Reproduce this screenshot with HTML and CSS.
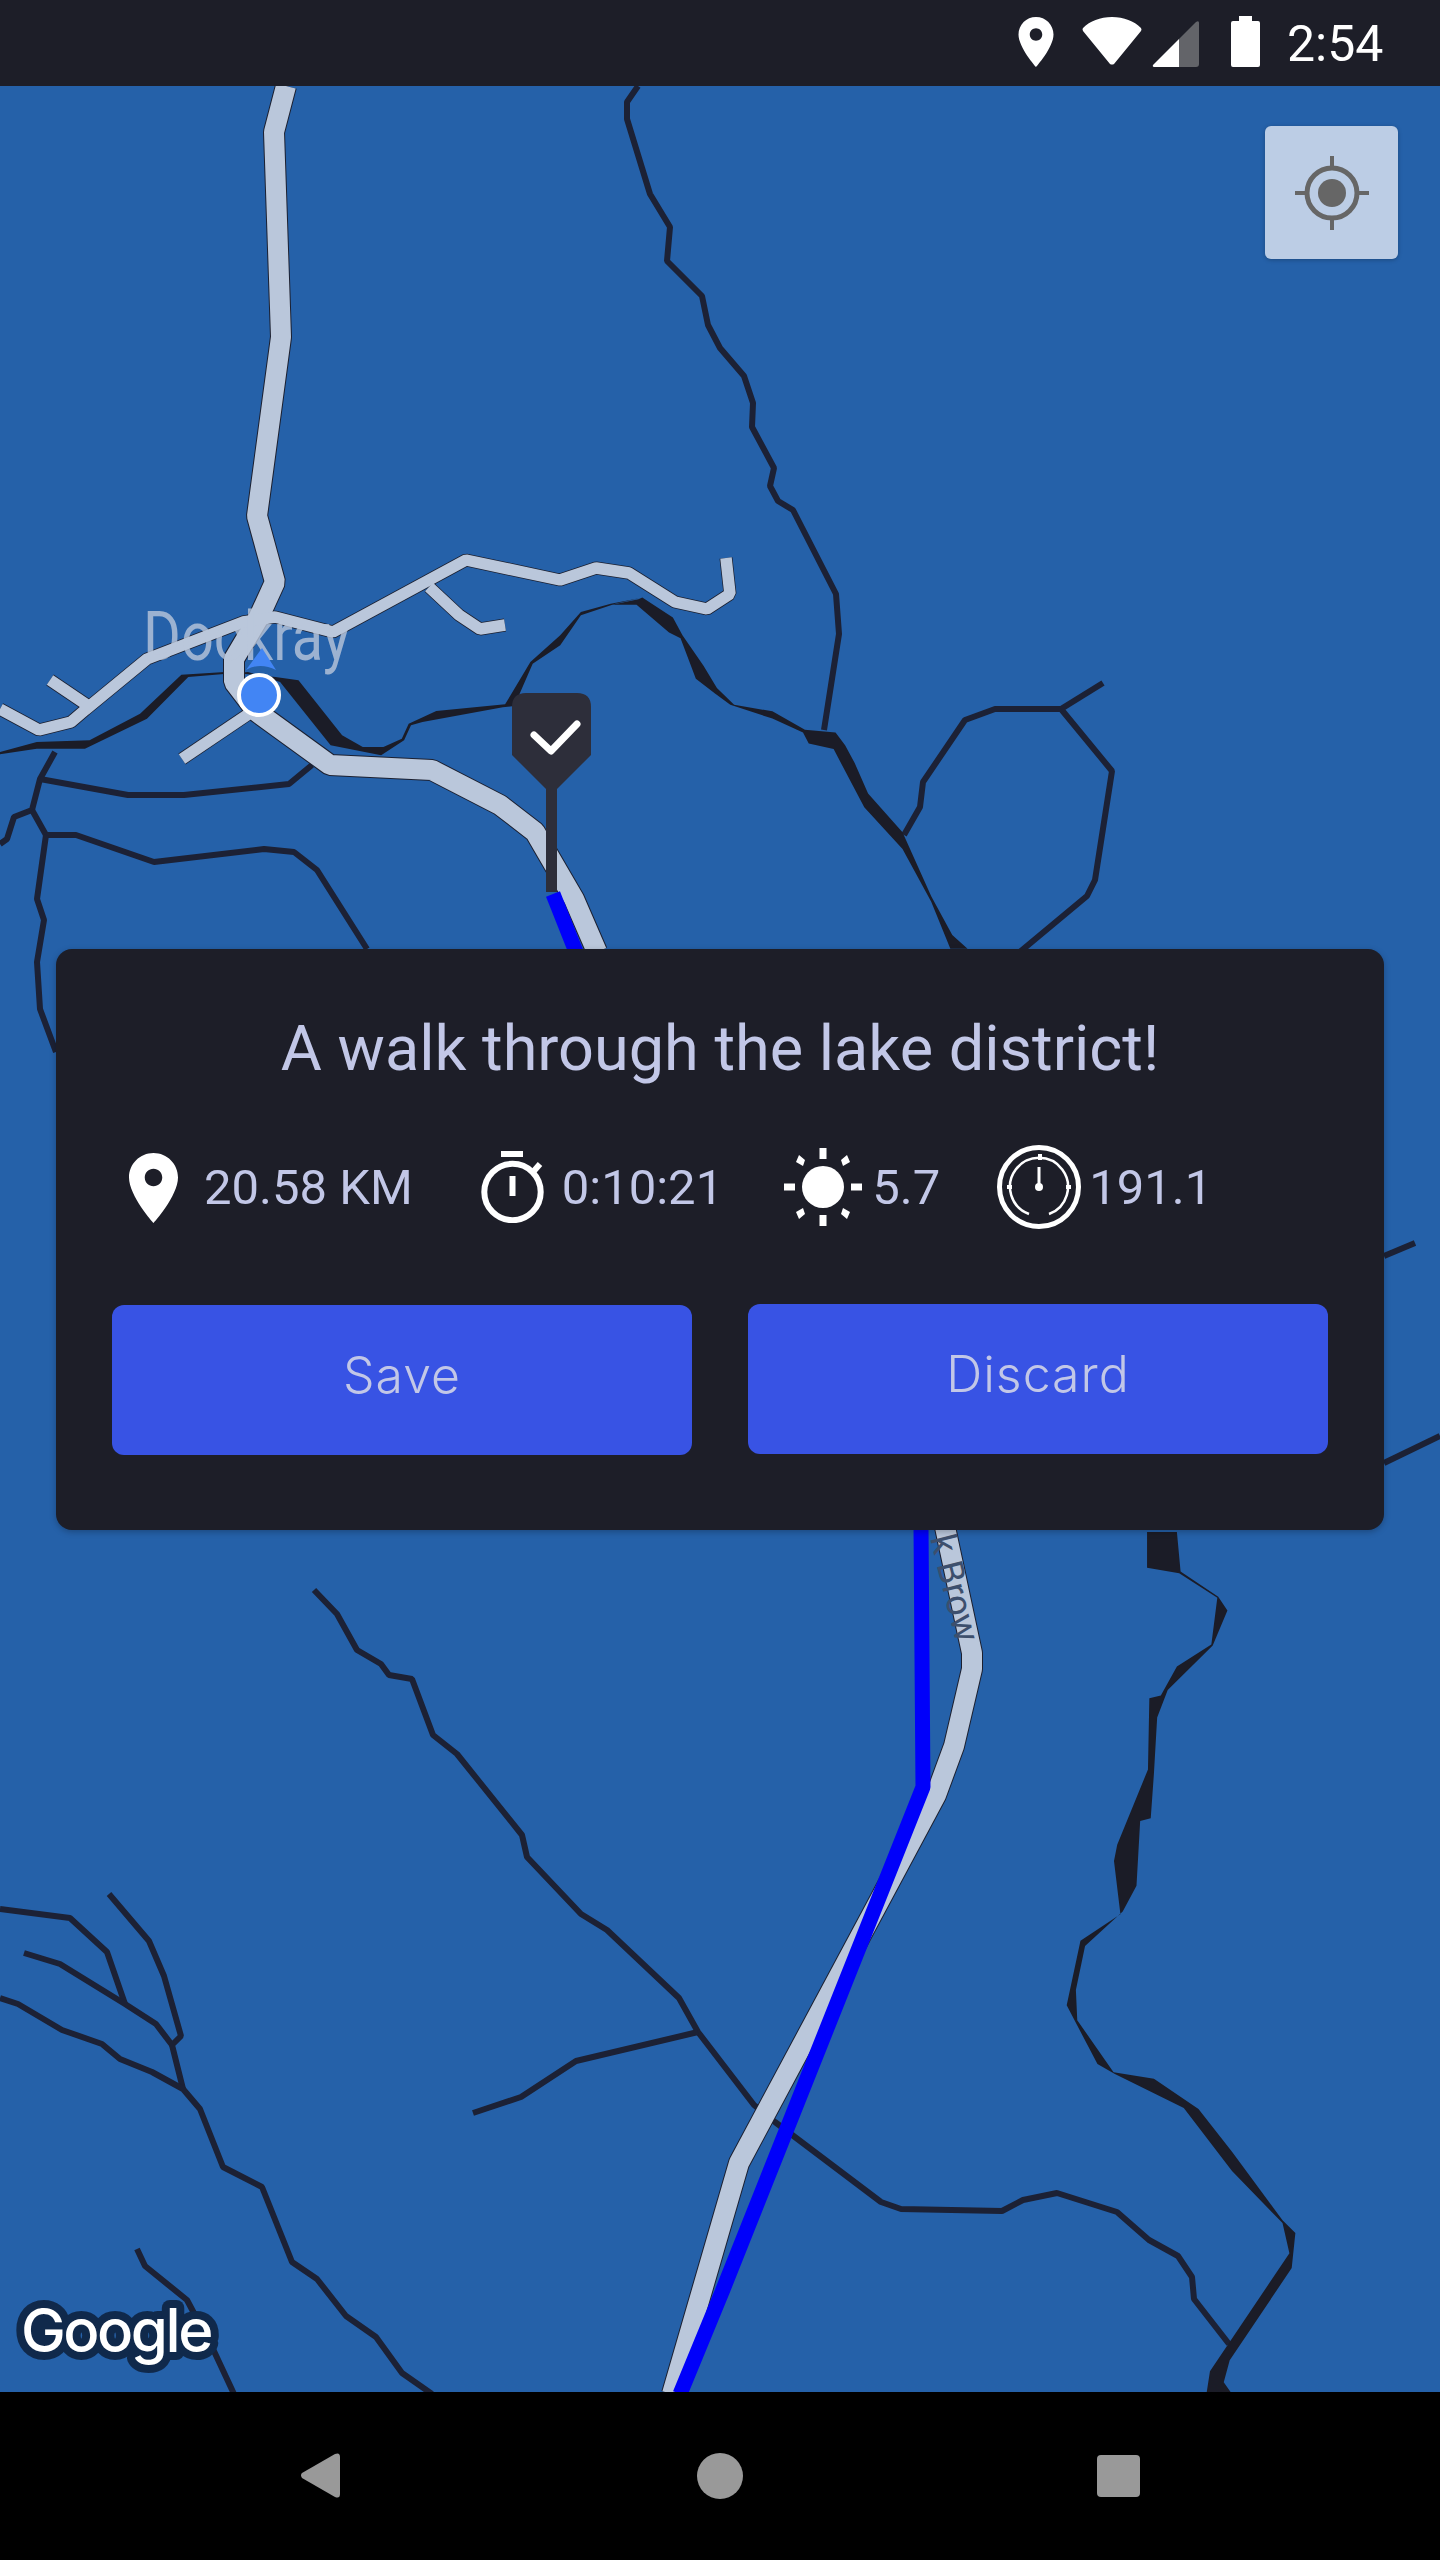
FILE: index.html
```html
<!DOCTYPE html>
<html lang="en">
<head>
<meta charset="utf-8">
<title>Walk summary</title>
<link rel="stylesheet" href="styles.css">
</head>
<body>
<div class="screen">
  <header class="status-bar">
    <svg class="st-pin" viewBox="5 2 14 20"><path d="M12 2C8.13 2 5 5.13 5 9c0 5.25 7 13 7 13s7-7.75 7-13c0-3.87-3.13-7-7-7zm0 9.5c-1.38 0-2.5-1.12-2.5-2.5s1.12-2.5 2.5-2.5 2.5 1.12 2.5 2.5-1.12 2.5-2.5 2.5z"/></svg>
    <svg class="st-wifi" viewBox="0 0 60 48"><path d="M1 11C8 4 18 0 30 0s22 4 29 11q1 2 0 3L32 47q-2 1-4 0L1 14q-1-2 0-3z"/></svg>
    <svg class="st-signal" viewBox="0 0 47 47"><path d="M1 45 27 19V47H3Q0 47 1 45Z"/><path class="dim" d="M27 19 44 2Q47 0 47 3V44Q47 47 44 47H27Z"/></svg>
    <svg class="st-battery" viewBox="0 0 29 51"><path d="M8 0H21V5H27Q29 5 29 7V49Q29 51 27 51H2Q0 51 0 49V7Q0 5 2 5H8Z"/></svg>
    <span class="st-time">2:54</span>
  </header>

  <main class="map">
    <svg class="map-canvas" viewBox="0 84 1440 2308">
      <!-- thin streams -->
      <g class="stream">
        <polyline points="638,84 627,100 627,117 650,192 670,225 667,259 702,294 708,323 720,346 744,374 753,401 752,425 774,466 770,484 778,499 793,508 836,592 839,632 824,728"/>
        <polyline points="904,833 920,805 923,780 965,718 995,707 1061,707 1112,769 1095,878 1087,894 1015,954"/>
        <polyline points="1061,707 1103,681"/>
        <polyline points="55,750 40,777 32,808 14,815 7,837 0,842"/>
        <polyline points="40,777 128,793 184,793 289,782 312,763"/>
        <polyline points="32,808 46,833 76,833 154,860 264,847 294,850 317,868 367,947"/>
        <polyline points="46,833 37,897 44,918 37,960 40,1007 56,1050"/>
        <polyline points="1384,1254 1415,1241"/>
        <polyline points="1384,1461 1440,1434"/>
        <polyline points="314,1588 337,1612 357,1648 381,1662 389,1673 412,1677 433,1733 457,1752 522,1833 527,1855 581,1912 607,1928 679,1996 698,2030 754,2103 775,2120 881,2200 901,2207 1002,2209 1023,2198 1057,2191 1117,2210 1149,2238 1178,2254 1192,2275 1194,2297 1229,2342"/>
        <polyline points="473,2111 521,2095 576,2059 698,2030"/>
        <polyline points="0,1907 70,1916 107,1950 125,2002"/>
        <polyline points="24,1951 60,1962 125,2002 156,2022 172,2043"/>
        <polyline points="109,1892 149,1939 164,1974 181,2034 172,2043 183,2087"/>
        <polyline points="0,1996 18,2002 62,2028 102,2042 120,2057 152,2070 183,2087 200,2107 223,2165 262,2185 292,2260 317,2277 346,2314 376,2335 402,2371 432,2392"/>
        <polyline points="137,2247 145,2264 187,2298 213,2347 234,2392"/>
      </g>
      <!-- wide rivers, drawn with varying width -->
      <g class="river">
        <polygon transform="translate(0 520) scale(.4592 .3333)" points="0,690 80,660 195,655 305,575 395,458 490,450 600,465 650,475 745,640 790,675 835,675 875,650 890,605 950,567 1100,547 1155,420 1220,340 1265,270 1330,245 1395,228 1340,245 1265,280 1220,370 1160,425 1120,552 1095,556 920,600 895,610 880,655 830,700 720,670 610,480 540,450 410,465 320,590 185,680 80,680 0,697"/>
        <polygon transform="translate(560 84) scale(.3827 .5549)" points="215,922 295,958 320,990 375,1045 410,1085 455,1115 555,1127 640,1160 720,1165 745,1188 770,1220 805,1275 895,1345 970,1460 1025,1530 1065,1555 1020,1555 970,1470 895,1375 795,1300 715,1195 650,1185 635,1165 555,1140 445,1115 405,1095 355,1068 315,995 285,985 200,935 135,935 205,925"/>
        <polygon transform="translate(720 1530) scale(.4592 .5485)" points="930,0 995,0 1003,72 1085,118 1105,143 1073,207 975,288 952,338 945,440 938,522 915,527 907,645 877,692 795,755 775,835 778,890 857,985 945,997 1042,1052 1115,1130 1225,1255 1253,1278 1245,1342 1110,1510 1097,1550 1112,1568 1060,1568 1067,1530 1240,1315 1225,1260 1115,1165 1010,1050 860,988 822,970 755,863 785,745 872,697 858,600 865,570 932,433 935,303 960,298 995,245 1070,205 1083,120 1000,75 930,65"/>
      </g>
      <!-- roads -->
      <g class="road-edge wide">
        <polyline points="286,84 274,130 281,335 257,514 275,580 259,615 234,657 234,680 257,710 330,763 432,768 500,803 535,830 574,897 597,950"/>
        <polyline points="945,1525 972,1651 972,1667 954,1744 936,1793 739,2161 672,2392"/>
      </g>
      <g class="road-edge narrow">
        <polyline points="0,707 39,728 71,720 85,708 147,657 243,620 275,615 333,630 466,558 560,578 596,566 629,571 675,600 707,607 730,592 726,556"/>
        <polyline points="50,678 90,705"/>
        <polyline points="429,585 459,613 480,627 505,623"/>
        <polyline points="182,757 259,705"/>
      </g>
      <g class="road wide">
        <polyline points="286,84 274,130 281,335 257,514 275,580 259,615 234,657 234,680 257,710 330,763 432,768 500,803 535,830 574,897 597,950"/>
        <polyline points="945,1525 972,1651 972,1667 954,1744 936,1793 739,2161 672,2392"/>
      </g>
      <g class="road narrow">
        <polyline points="0,707 39,728 71,720 85,708 147,657 243,620 275,615 333,630 466,558 560,578 596,566 629,571 675,600 707,607 730,592 726,556"/>
        <polyline points="50,678 90,705"/>
        <polyline points="429,585 459,613 480,627 505,623"/>
        <polyline points="182,757 259,705"/>
      </g>
      <!-- walked route -->
      <polyline class="route" points="553,892 576,950"/>
      <polyline class="route" points="921,1525 923,1785 722,2290 680,2392"/>
      <!-- labels -->
      <text class="label-town" x="143" y="658" textLength="207" lengthAdjust="spacingAndGlyphs">Dockray</text>
      <text class="label-road" transform="translate(930 1536) rotate(76)">k Brow</text>
      <!-- my location -->
      <path class="me-arrow" d="M262 646 246 668Q260 660 276 668Z"/>
      <circle class="me-dot" cx="259" cy="693" r="20"/>
      <!-- end marker -->
      <path class="pin-body" d="M526 691H577Q591 691 591 705V753L557 787V890H546V787L512 753V705Q512 691 526 691Z"/>
      <polyline class="pin-check" points="534,733 551,749 577,722"/>
      <text class="google" x="21" y="2350">Google</text>
    </svg>

    <button class="locate" type="button" aria-label="My location">
      <svg viewBox="0 0 76 76"><circle class="ring" cx="38" cy="38" r="25"/><circle class="core" cx="38" cy="38" r="14"/><path class="ticks" d="M38 1V12M38 64V75M1 38H12M64 38H75"/></svg>
    </button>

    <section class="card">
      <h1 class="card-title">A walk through the lake district!</h1>
      <div class="stats">
        <div class="stat stat-distance">
          <svg class="ic-pin" viewBox="5 2 14 20"><path d="M12 2C8.13 2 5 5.13 5 9c0 5.25 7 13 7 13s7-7.75 7-13c0-3.87-3.13-7-7-7zm0 9.5c-1.38 0-2.5-1.12-2.5-2.5s1.12-2.5 2.5-2.5 2.5 1.12 2.5 2.5-1.12 2.5-2.5 2.5z"/></svg>
          <span>20.58 KM</span>
        </div>
        <div class="stat stat-time">
          <svg class="ic-watch" viewBox="0 0 63 72"><rect x="20" y="0" width="22" height="6"/><circle class="line" cx="31.5" cy="41" r="28.2"/><rect x="28.5" y="25" width="6" height="20"/><path class="line" d="M52 21 59 13"/></svg>
          <span>0:10:21</span>
        </div>
        <div class="stat stat-sun">
          <svg class="ic-sun" viewBox="0 0 78 78">
            <circle cx="39" cy="39" r="21"/>
            <rect x="35.5" y="0" width="7" height="11"/><rect x="35.5" y="67" width="7" height="11"/>
            <rect x="0" y="35.5" width="11" height="7"/><rect x="67" y="35.5" width="11" height="7"/>
            <path d="M15 7 21 12 19 18 12 14ZM63 7 57 12 59 18 66 14ZM15 71 21 66 19 60 12 64ZM63 71 57 66 59 60 66 64Z"/>
          </svg>
          <span>5.7</span>
        </div>
        <div class="stat stat-speed">
          <svg class="ic-gauge" viewBox="0 0 84 84">
            <circle class="outer" cx="42" cy="42" r="39.5"/>
            <path class="inner" d="M32 69A29 29 0 1 1 52 69"/>
            <rect x="41" y="9" width="4" height="6"/><rect x="10" y="40" width="5" height="4"/><rect x="69" y="40" width="5" height="4"/>
            <rect x="40.5" y="22" width="3" height="20"/><circle cx="42" cy="42" r="4"/>
          </svg>
          <span>191.1</span>
        </div>
      </div>
      <div class="actions">
        <button class="btn btn-save" type="button">Save</button>
        <button class="btn" type="button">Discard</button>
      </div>
    </section>
  </main>

  <footer class="nav-bar">
    <svg class="nav-back" viewBox="0 0 39 45"><path d="M1 20 34 1Q39-1 39 4V41Q39 46 34 44L1 25Q-1 22 1 20Z"/></svg>
    <span class="nav-home"></span>
    <span class="nav-recent"></span>
  </footer>
</div>
</body>
</html>
```

FILE: styles.css
```css
* { box-sizing: border-box; }

html, body {
  margin: 0;
  padding: 0;
  background: #000;
}

body {
  font-family: Roboto, "Liberation Sans", sans-serif;
}

.screen {
  display: flex;
  flex-direction: column;
  width: 1440px;
  height: 2560px;
  overflow: hidden;
}

/* status bar */
.status-bar {
  flex: 0 0 84px;
  display: flex;
  align-items: flex-start;
  padding-left: 1018px;
  background: #1d1e28;
  color: #fff;
  fill: #fff;
}

.st-pin { width: 36px; height: 50px; margin-top: 17px; }
.st-wifi { width: 60px; height: 48px; margin-top: 17px; margin-left: 28px; }
.st-signal { width: 47px; height: 47px; margin-top: 20px; margin-left: 10px; }
.st-signal .dim { fill: #636469; }
.st-battery { width: 29px; height: 51px; margin-top: 16px; margin-left: 32px; }
.st-time {
  margin-left: 27px;
  margin-top: 2px;
  font-size: 50px;
  line-height: 84px;
}

/* map */
.map {
  position: relative;
  flex: 1 1 auto;
  background: #2561a9;
  overflow: hidden;
}

.map-canvas {
  position: absolute;
  left: 0;
  top: 0;
  width: 1440px;
  height: 2308px;
}

.stream polyline {
  fill: none;
  stroke: #1c2135;
  stroke-width: 6;
  stroke-linejoin: bevel;
}

.river polygon { fill: #1b1c27; }

.road-edge polyline, .road polyline {
  fill: none;
  stroke-linejoin: bevel;
}
.road-edge polyline { stroke: #1c2030; }
.road polyline { stroke: #bac7db; }
.road-edge.wide polyline { stroke-width: 22; }
.road.wide polyline { stroke-width: 20; }
.road-edge.narrow polyline { stroke-width: 13; }
.road.narrow polyline { stroke-width: 11.5; }

.route {
  fill: none;
  stroke: #0000fa;
  stroke-width: 15;
  stroke-linejoin: bevel;
}

.label-town {
  font-family: Roboto, sans-serif;
  font-size: 68px;
  font-weight: 400;
  fill: #bac7db;
  fill-opacity: .8;
}

.label-road {
  font-family: Roboto, sans-serif;
  font-size: 36px;
  fill: #3d4f6d;
}

.me-arrow { fill: #4285f4; }
.me-dot {
  fill: #4285f4;
  stroke: #fff;
  stroke-width: 4;
}

.pin-body { fill: #2d2e3a; }
.pin-check {
  fill: none;
  stroke: #fff;
  stroke-width: 7;
  stroke-linecap: round;
  stroke-linejoin: round;
}

.google {
  font-family: Inter, sans-serif;
  font-size: 60px;
  font-weight: 500;
  letter-spacing: -2.5px;
  fill: #fff;
  stroke: #10294b;
  stroke-width: 16;
  stroke-linejoin: round;
  paint-order: stroke;
}

.locate {
  position: absolute;
  top: 40px;
  right: 42px;
  display: flex;
  align-items: center;
  justify-content: center;
  width: 133px;
  height: 133px;
  padding: 0;
  border: 0;
  border-radius: 6px;
  background: #bccde5;
  box-shadow: 0 1px 4px rgba(0, 0, 0, .25);
}
.locate svg { width: 76px; height: 76px; }
.locate .ring { fill: none; stroke: #666; stroke-width: 5; }
.locate .core { fill: #666; }
.locate .ticks { fill: none; stroke: #666; stroke-width: 4; }

/* summary card */
.card {
  position: absolute;
  left: 56px;
  top: 863px;
  width: 1328px;
  height: 581px;
  padding: 0 56px;
  background: #1d1e28;
  border-radius: 16px;
  box-shadow: 0 2px 6px rgba(0, 0, 0, .25);
  color: #c2c7e7;
}

.card-title {
  margin: 64px 0 0;
  font-size: 63px;
  font-weight: 400;
  line-height: 72px;
  text-align: center;
}

.stats {
  display: flex;
  align-items: center;
  height: 84px;
  margin-top: 60px;
  padding-left: 17px;
  font-size: 49px;
  font-weight: 400;
}

.stat {
  display: flex;
  align-items: center;
}
.stat svg { fill: #fff; flex: none; }

.stat-distance { gap: 26px; }
.stat-time { gap: 18px; margin-left: 68px; }
.stat-sun { gap: 10px; margin-left: 61px; }
.stat-speed { gap: 8px; margin-left: 57px; }

.ic-pin { width: 49px; height: 70px; margin-top: 1px; }
.ic-watch { width: 63px; height: 72px; }
.ic-watch .line { fill: none; stroke: #fff; stroke-width: 6; }
.ic-sun { width: 78px; height: 78px; }
.ic-gauge { width: 84px; height: 84px; }
.ic-gauge .outer { fill: none; stroke: #fff; stroke-width: 5; }
.ic-gauge .inner { fill: none; stroke: #fff; stroke-width: 2.5; }

.actions {
  display: grid;
  grid-template-columns: 580px 580px;
  gap: 56px;
  margin-top: 75px;
}

.btn {
  height: 150px;
  padding: 0 0 10px;
  border: 0;
  border-radius: 12px;
  background: #3853e4;
  color: #c2c7e7;
  font-family: Inter, sans-serif;
  font-size: 50px;
  font-weight: 300;
  letter-spacing: 1px;
}
.btn-save { margin-top: 1px; }

/* nav bar */
.nav-bar {
  flex: 0 0 168px;
  display: flex;
  align-items: center;
  padding-left: 301px;
  padding-bottom: 1px;
  background: #000;
}
.nav-back { width: 39px; height: 45px; fill: #999; }
.nav-home {
  width: 46px;
  height: 46px;
  margin-left: 357px;
  border-radius: 50%;
  background: #999;
}
.nav-recent {
  width: 43px;
  height: 42px;
  margin-left: 354px;
  border-radius: 4px;
  background: #999;
}
```
